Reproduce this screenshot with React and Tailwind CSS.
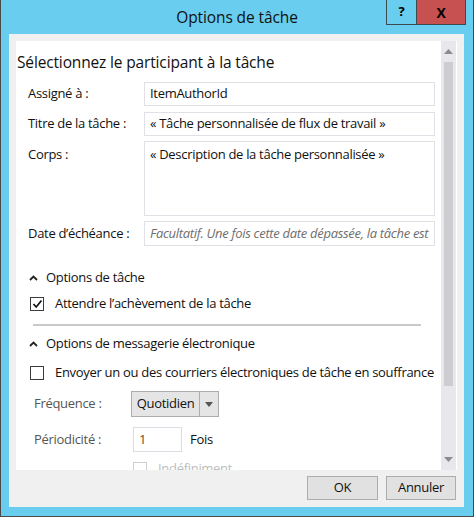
import React from "react";

const font = { fontFamily: '"Open Sans", "Noto Sans", sans-serif' };

function Caret() {
  return (
    <svg width="9" height="6" viewBox="0 0 9 6" className="shrink-0">
      <polyline points="1,5 4.5,1.5 8,5" fill="none" stroke="#222" strokeWidth="1.8" />
    </svg>
  );
}

function Checkbox({ checked, faded }) {
  return (
    <div
      className={
        "w-[14px] h-[14px] border bg-white flex items-center justify-center shrink-0 " +
        (faded ? "border-[#cfcfcf]" : "border-[#3c3c3c]")
      }
    >
      {checked && (
        <svg width="11" height="10" viewBox="0 0 11 10">
          <polyline points="1.5,5 4.2,8 9.5,1.5" fill="none" stroke="#111" strokeWidth="1.7" />
        </svg>
      )}
    </div>
  );
}

function Field({ label, children, box, top }) {
  return (
    <div className="flex shrink-0">
      <div className={"w-[128px] pl-[12px] " + (top ? "pt-[4px]" : "flex items-center")}>
        {label}
      </div>
      <div className={"w-[291px] border border-[#e0e0e6] bg-white px-[5px] overflow-hidden whitespace-nowrap " + box + (top ? " pt-[3px]" : " flex items-center")}>
        {children}
      </div>
    </div>
  );
}

export default function App() {
  return (
    <div className="w-[474px] h-[517px] bg-[#68cdef] border-x border-b border-[#4a4a4a] flex flex-col text-[13px] tracking-[-0.3px] text-[#111]" style={font}>
      {/* title bar */}
      <div className="relative h-[34px] shrink-0 flex items-center justify-center">
        <span className="text-[15.5px] tracking-[-0.1px] pt-[2px]">Options de tâche</span>
        <div className="absolute top-0 right-[7px] flex">
          <div className="w-[31px] h-[25px] border border-t-0 border-[#3d4a52] flex items-center justify-center text-[13px] font-bold text-black">
            ?
          </div>
          <div className="w-[49px] h-[25px] bg-[#c75050] border border-l-0 border-t-0 border-[#3d4a52] flex items-center justify-center text-[14px] font-bold text-black">
            X
          </div>
        </div>
      </div>

      {/* client area */}
      <div className="ml-[8px] w-[455px] h-[473px] bg-[#f0f0f0] p-[7px] flex flex-col">
        <div className="flex h-[429px] shrink-0 bg-white overflow-hidden">
          <div className="w-[425px] flex flex-col overflow-hidden">
            <div className="shrink-0 pl-[1px] pt-[10px] h-[41px] text-[15.5px] tracking-[-0.15px] whitespace-nowrap">
              Sélectionnez le participant à la tâche
            </div>
            <Field label="Assigné à :" box="h-[24px]">ItemAuthorId</Field>
            <div className="h-[6px] shrink-0" />
            <Field label="Titre de la tâche :" box="h-[24px]">« Tâche personnalisée de flux de travail »</Field>
            <div className="h-[5px] shrink-0" />
            <Field label="Corps :" box="h-[75px]" top>
              « Description de la tâche personnalisée »
            </Field>
            <div className="h-[5px] shrink-0" />
            <Field label="Date d’échéance :" box="h-[25px]">
              <span className="italic text-[#6e6e6e]">
                Facultatif. Une fois cette date dépassée, la tâche est
              </span>
            </Field>

            <div className="shrink-0 mt-[20px] h-[24px] pl-[13px] flex items-center gap-[8px]">
              <Caret />
              <span>Options de tâche</span>
            </div>
            <div className="shrink-0 mt-[2px] h-[24px] pl-[14px] flex items-center gap-[11px]">
              <Checkbox checked />
              <span>Attendre l’achèvement de la tâche</span>
            </div>
            <div className="shrink-0 mt-[8px] ml-[17px] w-[388px] h-[2px] bg-[#c9c9c9]" />
            <div className="shrink-0 mt-[6px] h-[24px] pl-[13px] flex items-center gap-[8px]">
              <Caret />
              <span>Options de messagerie électronique</span>
            </div>
            <div className="shrink-0 mt-[5px] h-[24px] pl-[14px] flex items-center gap-[11px] whitespace-nowrap">
              <Checkbox />
              <span>Envoyer un ou des courriers électroniques de tâche en souffrance</span>
            </div>
            <div className="shrink-0 mt-[6px] flex items-center h-[26px]">
              <div className="w-[115px] pl-[18px] text-[#555]">Fréquence :</div>
              <div className="flex h-[26px] border border-[#adadad] bg-[#e5e5e5]">
                <div className="w-[68px] flex items-center justify-center border-r border-[#adadad]">
                  Quotidien
                </div>
                <div className="w-[18px] flex items-center justify-center">
                  <svg width="8" height="5" viewBox="0 0 8 5">
                    <polygon points="0,0 8,0 4,5" fill="#555" />
                  </svg>
                </div>
              </div>
            </div>
            <div className="shrink-0 mt-[10px] flex items-center h-[25px]">
              <div className="w-[117px] pl-[18px] text-[#555]">Périodicité :</div>
              <div className="w-[49px] h-[25px] border border-[#dcdce4] bg-white flex items-center px-[5px] text-[#6b4a1a]">
                1
              </div>
              <span className="ml-[8px]">Fois</span>
            </div>
            <div className="shrink-0 mt-[7px] h-[20px] ml-[117px] flex items-center gap-[11px] text-[#bdbdbd]">
              <Checkbox faded />
              <span>Indéfiniment</span>
            </div>
          </div>

          {/* scrollbar */}
          <div className="w-[15px] bg-[#e8e8ec] flex flex-col items-center">
            <div className="h-[21px] shrink-0 flex items-center justify-center">
              <svg width="9" height="5" viewBox="0 0 9 5">
                <polygon points="4.5,0 9,5 0,5" fill="#8c8c8c" />
              </svg>
            </div>
            <div className="w-[9px] h-[324px] shrink-0 bg-[#cdcdd1]" />
            <div className="flex-1" />
            <div className="h-[21px] shrink-0 flex items-center justify-center">
              <svg width="9" height="5" viewBox="0 0 9 5">
                <polygon points="0,0 9,0 4.5,5" fill="#8c8c8c" />
              </svg>
            </div>
          </div>
        </div>

        {/* buttons */}
        <div className="mt-[6px] flex justify-end gap-[8px] pr-[1px]">
          <div className="w-[71px] h-[24px] border border-[#adadad] bg-[#e1e1e1] flex items-center justify-center">
            OK
          </div>
          <div className="w-[70px] h-[24px] border border-[#adadad] bg-[#e1e1e1] flex items-center justify-center">
            Annuler
          </div>
        </div>
      </div>
    </div>
  );
}
